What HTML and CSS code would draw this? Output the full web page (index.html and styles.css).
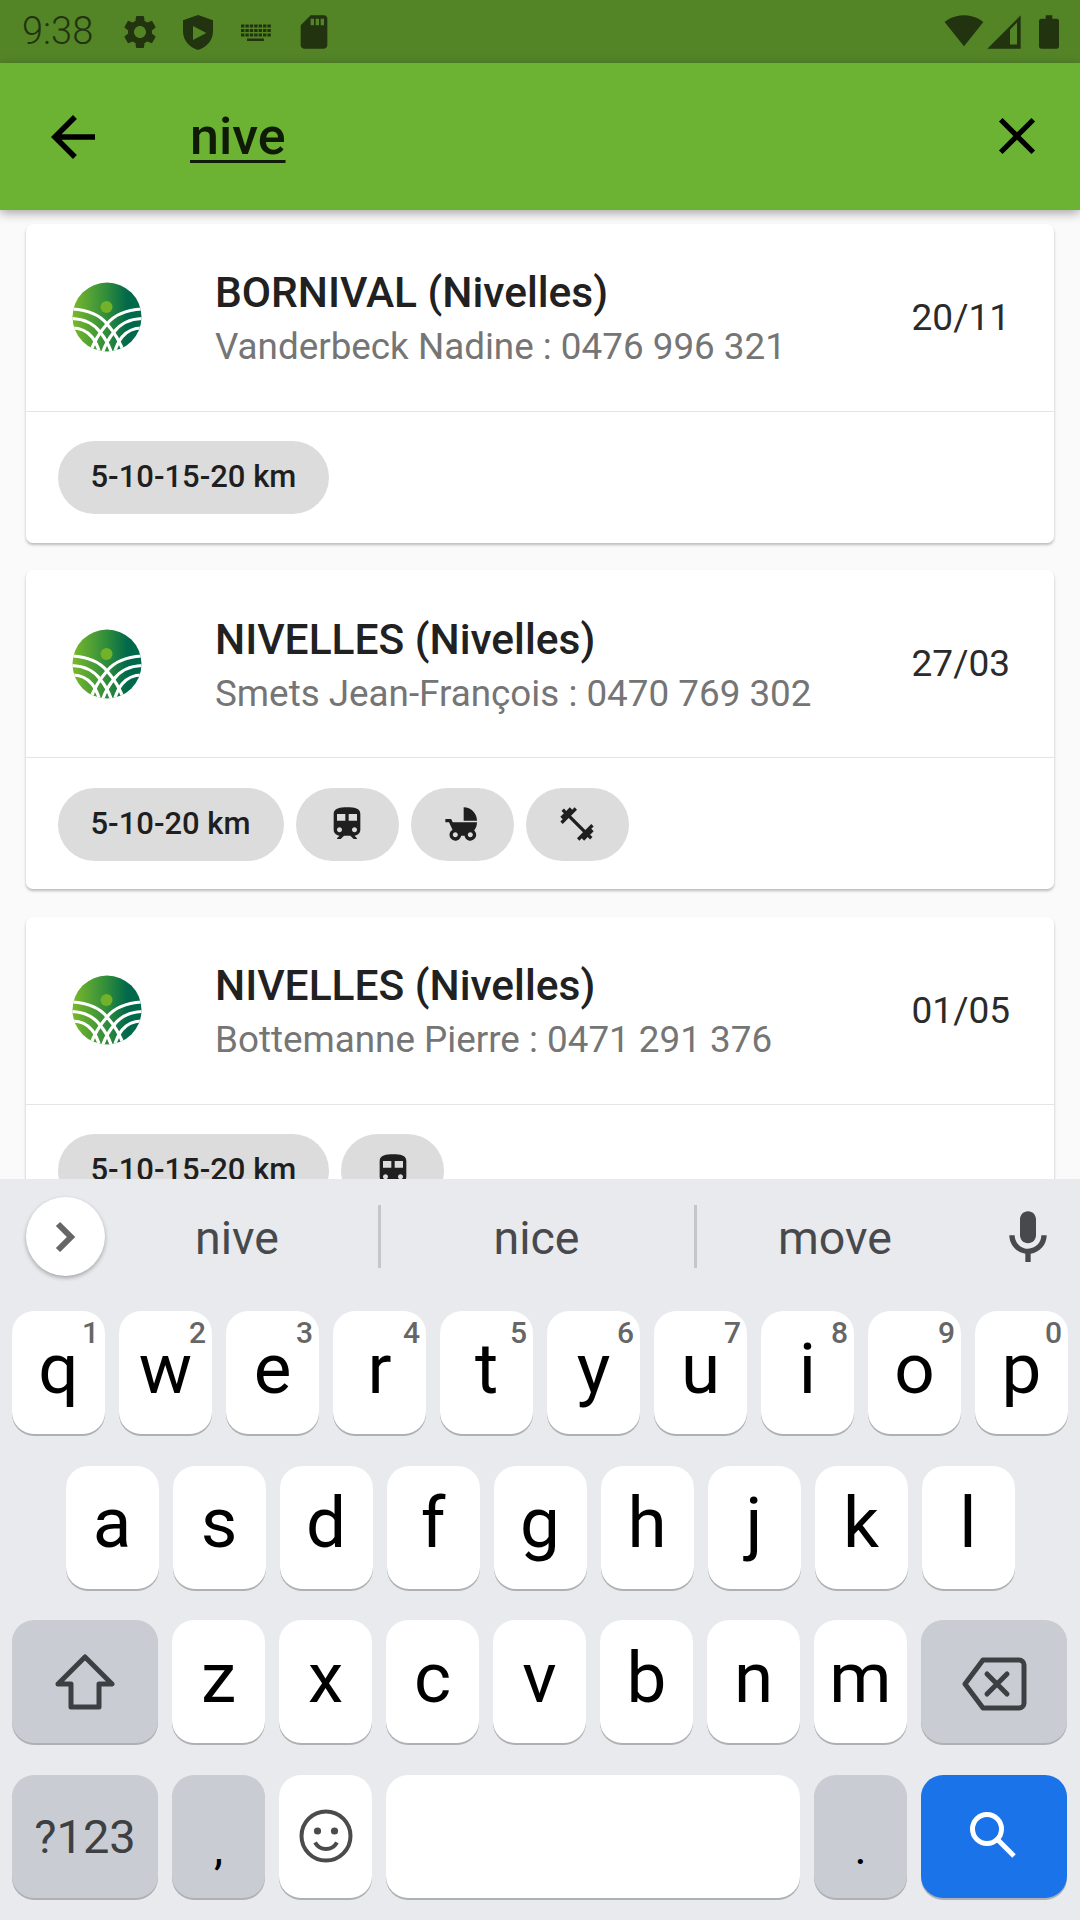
FILE: index.html
```html
<!DOCTYPE html>
<html lang="fr">
<head>
<meta charset="utf-8">
<title>Recherche</title>
<link rel="stylesheet" href="styles.css">
</head>
<body>
<div class="screen">
  <div class="status">
    <span class="time">9:38</span>
    <div class="status-left">
      <svg class="si" viewBox="0 0 24 24"><path d="M19.14,12.94c0.04-0.3,0.06-0.61,0.06-0.94c0-0.32-0.02-0.64-0.07-0.94l2.03-1.58c0.18-0.14,0.23-0.41,0.12-0.61l-1.92-3.32c-0.12-0.22-0.37-0.29-0.59-0.22l-2.39,0.96c-0.5-0.38-1.03-0.7-1.62-0.94L14.4,2.81c-0.04-0.24-0.24-0.41-0.48-0.41h-3.84c-0.24,0-0.43,0.17-0.47,0.41L9.25,5.35C8.66,5.59,8.12,5.92,7.63,6.29L5.24,5.33c-0.22-0.08-0.47,0-0.59,0.22L2.74,8.87C2.62,9.08,2.66,9.34,2.86,9.48l2.03,1.58C4.84,11.36,4.8,11.69,4.8,12s0.02,0.64,0.07,0.94l-2.03,1.58c-0.18,0.14-0.23,0.41-0.12,0.61l1.92,3.32c0.12,0.22,0.37,0.29,0.59,0.22l2.39-0.96c0.5,0.38,1.03,0.7,1.62,0.94l0.36,2.54c0.05,0.24,0.24,0.41,0.48,0.41h3.84c0.24,0,0.44-0.17,0.47-0.41l0.36-2.54c0.59-0.24,1.13-0.56,1.62-0.94l2.39,0.96c0.22,0.08,0.47,0,0.59-0.22l1.92-3.32c0.12-0.22,0.07-0.47-0.12-0.61L19.14,12.94z M12,15.6c-1.98,0-3.6-1.62-3.6-3.6s1.62-3.6,3.6-3.6s3.6,1.62,3.6,3.6S13.98,15.6,12,15.6z"/></svg>
      <svg class="si" viewBox="0 0 24 24"><path fill-rule="evenodd" d="M12 1.8L21 5v6.5c0 5.5-3.8 9.6-9 11.3c-5.2-1.7-9-5.8-9-11.3V5z M9 8.4v8.4l8-4.2z"/></svg>
      <svg class="si kb" viewBox="0 0 40 40"><path class="kb-keys" d="M5 14h30M5 18.5h30M5 23h30"/><path d="M11 26.5h17v2.5H11z"/></svg>
      <svg class="si" viewBox="0 0 24 24"><path d="M18 2h-8L4.02 8 4 20c0 1.1.9 2 2 2h12c1.1 0 2-.9 2-2V4c0-1.1-.9-2-2-2zm-6 6h-2V4h2v4zm3 0h-2V4h2v4zm3 0h-2V4h2v4z"/></svg>
    </div>
    <div class="status-right">
      <svg class="si" viewBox="0 1 24 24"><path d="M12.01 21.49L23.64 7c-.45-.34-4.93-4-11.64-4C5.28 3 .81 6.66.36 7l11.63 14.49.01.01.01-.01z"/></svg>
      <svg class="si" viewBox="0 0 24 24"><path fill-rule="evenodd" d="M2 22h20V2z M15.6 10.6v8.9h4.2V6.3z"/></svg>
      <svg class="si batt" viewBox="0 0 24 24"><path d="M16.67 4H14V2h-4v2H7.33C6.6 4 6 4.6 6 5.33v15.33C6 21.4 6.6 22 7.33 22h9.33c.74 0 1.34-.6 1.34-1.33V5.33C18 4.6 17.4 4 16.67 4z"/></svg>
    </div>
  </div>

  <header class="appbar">
    <svg class="ab-icon" viewBox="0 0 24 24"><path d="M20 11H7.83l5.59-5.59L12 4l-8 8 8 8 1.41-1.41L7.83 13H20v-2z"/></svg>
    <span class="query">nive</span>
    <svg class="ab-icon ab-close" viewBox="0 0 24 24"><path d="M19 6.41L17.59 5 12 10.59 6.41 5 5 6.41 10.59 12 5 17.59 6.41 19 12 13.41 17.59 19 19 17.59 13.41 12z"/></svg>
  </header>

  <main class="list">
    <svg class="defs" width="0" height="0" aria-hidden="true">
      <defs>
        <linearGradient id="lg" x1="0" x2="1" y1="0" y2="0"><stop offset="0" stop-color="#79b82b"/><stop offset="0.5" stop-color="#2f8c3c"/><stop offset="0.8" stop-color="#00684b"/></linearGradient>
        <clipPath id="lc"><circle cx="35" cy="35" r="34.5"/></clipPath>
        <g id="arcs" class="logo-arcs">
          <path d="M0 27C15 28 28 33 35 42C42 50 48 58 52 72"/>
          <path d="M0 36.500C12 37 22 42 28 50C33 56 37 63 40 72"/>
          <path d="M0 46C8 46 15 49 20 55C24 60 26 65 28 72"/>
        </g>
        <symbol id="logo" viewBox="0 0 70 70">
          <circle cx="35" cy="35" r="34.5" fill="url(#lg)"/>
          <circle cx="34.5" cy="25" r="6" fill="#72b12a"/>
          <g clip-path="url(#lc)">
            <use href="#arcs"/>
            <use href="#arcs" transform="translate(70 0) scale(-1 1)"/>
          </g>
        </symbol>
      </defs>
    </svg>

    <article class="card">
      <div class="card-head">
        <svg class="logo"><use href="#logo"/></svg>
        <div class="info">
          <div class="title">BORNIVAL (Nivelles)</div>
          <div class="sub">Vanderbeck Nadine : 0476 996 321</div>
        </div>
        <div class="date">20/11</div>
      </div>
      <div class="chips">
        <span class="chip">5-10-15-20 km</span>
      </div>
    </article>

    <article class="card">
      <div class="card-head">
        <svg class="logo"><use href="#logo"/></svg>
        <div class="info">
          <div class="title">NIVELLES (Nivelles)</div>
          <div class="sub">Smets Jean-François : 0470 769 302</div>
        </div>
        <div class="date">27/03</div>
      </div>
      <div class="chips">
        <span class="chip">5-10-20 km</span>
        <span class="chip chip-icon"><svg viewBox="0 0 24 24"><path d="M12 2c-4 0-8 .5-8 4v9.5C4 17.43 5.57 19 7.5 19L6 20.5v.5h2.23l2-2H14l2 2h2v-.5L16.5 19c1.93 0 3.5-1.57 3.5-3.5V6c0-3.5-3.58-4-8-4zM7.5 17c-.83 0-1.5-.67-1.5-1.5S6.67 14 7.5 14s1.5.67 1.5 1.5S8.33 17 7.5 17zm3.5-7H6V6h5v4zm2 0V6h5v4h-5zm3.5 7c-.83 0-1.5-.67-1.5-1.5s.67-1.5 1.5-1.5 1.5.67 1.5 1.5-.67 1.5-1.5 1.5z"/></svg></span>
        <span class="chip chip-icon"><svg viewBox="0 0 24 24"><path d="M13 2v8h8c0-4.42-3.58-8-8-8zm6.32 13.89C20.37 14.54 21 12.84 21 11H6.44l-.95-2H2v2h2.22s1.89 4.07 2.12 4.42c-1.1.59-1.84 1.75-1.84 3.08C4.5 20.43 6.07 22 8 22c1.76 0 3.22-1.3 3.46-3h2.08c.24 1.7 1.7 3 3.46 3 1.93 0 3.5-1.57 3.5-3.5 0-1.04-.46-1.97-1.18-2.61zM8 20c-.83 0-1.5-.67-1.5-1.5S7.17 17 8 17s1.5.67 1.5 1.5S8.83 20 8 20zm9 0c-.83 0-1.5-.67-1.5-1.5S16.17 17 17 17s1.5.67 1.5 1.5S17.83 20 17 20z"/></svg></span>
        <span class="chip chip-icon"><svg viewBox="0 0 24 24"><path d="M20.57 14.86L22 13.43 20.57 12 17 15.57 8.43 7 12 3.43 10.57 2 9.14 3.43 7.71 2 5.57 4.14 4.14 2.71 2.71 4.14l1.43 1.43L2 7.71l1.43 1.43L2 10.57 3.43 12 7 8.43 15.57 17 12 20.57 13.43 22l1.43-1.43L16.29 22l2.14-2.14 1.43 1.43 1.43-1.43-1.43-1.43L22 16.29z"/></svg></span>
      </div>
    </article>

    <article class="card">
      <div class="card-head">
        <svg class="logo"><use href="#logo"/></svg>
        <div class="info">
          <div class="title">NIVELLES (Nivelles)</div>
          <div class="sub">Bottemanne Pierre : 0471 291 376</div>
        </div>
        <div class="date">01/05</div>
      </div>
      <div class="chips">
        <span class="chip">5-10-15-20 km</span>
        <span class="chip chip-icon"><svg viewBox="0 0 24 24"><path d="M12 2c-4 0-8 .5-8 4v9.5C4 17.43 5.57 19 7.5 19L6 20.5v.5h2.23l2-2H14l2 2h2v-.5L16.5 19c1.93 0 3.5-1.57 3.5-3.5V6c0-3.5-3.58-4-8-4zM7.5 17c-.83 0-1.5-.67-1.5-1.5S6.67 14 7.5 14s1.5.67 1.5 1.5S8.33 17 7.5 17zm3.5-7H6V6h5v4zm2 0V6h5v4h-5zm3.5 7c-.83 0-1.5-.67-1.5-1.5s.67-1.5 1.5-1.5 1.5.67 1.5 1.5-.67 1.5-1.5 1.5z"/></svg></span>
      </div>
    </article>
  </main>

  <section class="keyboard">
    <div class="strip">
      <span class="more"><svg viewBox="0 0 40 40"><path d="M14 7L27 20L14 33"/></svg></span>
      <span class="sug sug-1">nive</span>
      <i class="sep"></i>
      <span class="sug sug-2">nice</span>
      <i class="sep"></i>
      <span class="sug sug-3">move</span>
      <svg class="mic" viewBox="0 0 24 24"><path d="M12 14c1.66 0 3-1.34 3-3V5c0-1.66-1.34-3-3-3S9 3.34 9 5v6c0 1.66 1.34 3 3 3z M17 11c0 2.76-2.24 5-5 5s-5-2.24-5-5H5c0 3.53 2.61 6.43 6 6.92V21h2v-3.08c3.39-.49 6-3.39 6-6.92h-2z"/></svg>
    </div>
    <div class="rows">
      <div class="row">
        <span class="key">q<sup class="num">1</sup></span>
        <span class="key">w<sup class="num">2</sup></span>
        <span class="key">e<sup class="num">3</sup></span>
        <span class="key">r<sup class="num">4</sup></span>
        <span class="key">t<sup class="num">5</sup></span>
        <span class="key">y<sup class="num">6</sup></span>
        <span class="key">u<sup class="num">7</sup></span>
        <span class="key">i<sup class="num">8</sup></span>
        <span class="key">o<sup class="num">9</sup></span>
        <span class="key">p<sup class="num">0</sup></span>
      </div>
      <div class="row row-2">
        <span class="key">a</span><span class="key">s</span><span class="key">d</span><span class="key">f</span><span class="key">g</span><span class="key">h</span><span class="key">j</span><span class="key">k</span><span class="key">l</span>
      </div>
      <div class="row">
        <span class="key wide fn"><svg class="shift" viewBox="0 0 60 56"><path d="M30 3L57 30H44V53H16V30H3Z"/></svg></span>
        <span class="key">z</span><span class="key">x</span><span class="key">c</span><span class="key">v</span><span class="key">b</span><span class="key">n</span><span class="key">m</span>
        <span class="key wide fn"><svg class="bksp" viewBox="0 0 66 54"><path d="M22 3H58a5 5 0 0 1 5 5V46a5 5 0 0 1-5 5H22L4 27Z"/><path d="M26 17L46 37M46 17L26 37"/></svg></span>
      </div>
      <div class="row">
        <span class="key wide fn sym">?123</span>
        <span class="key fn punct">,</span>
        <span class="key icon-key"><svg class="emoji" viewBox="0 0 54 54"><circle class="face" cx="27" cy="27" r="24.5"/><circle class="eye" cx="18.5" cy="22" r="3.6"/><circle class="eye" cx="35.5" cy="22" r="3.6"/><path class="face" d="M16 33.5c3 5 7 6.5 11 6.5s8-1.500 11-6.500"/></svg></span>
        <span class="key space"></span>
        <span class="key fn punct">.</span>
        <span class="key wide go icon-key"><svg class="search" viewBox="0 0 50 50"><circle cx="18" cy="18" r="14.500"/><path d="M28.500 28.500L45 45"/></svg></span>
      </div>
    </div>
  </section>
</div>
</body>
</html>
```
FILE: styles.css
```css
* { box-sizing: border-box; }
html, body { margin: 0; padding: 0; }
body { width: 1080px; height: 1920px; overflow: hidden; font-family: Roboto, "Liberation Sans", sans-serif; background: #fafafa; }
.screen { width: 1080px; height: 1920px; display: flex; flex-direction: column; }

/* status bar */
.status { height: 63px; flex: none; background: #538527; display: flex; align-items: center; padding: 0 11px 0 22px; color: #22330f; }
.time { width: 98px; font-size: 38px; font-weight: 300; line-height: 63px; }
.status-left { display: flex; gap: 18px; flex: 1; }
.status-right { display: flex; }
.si { width: 40px; height: 40px; fill: #22330f; display: block; }
.batt { margin-left: 5px; }
.kb-keys { fill: none; stroke: #22330f; stroke-width: 3; stroke-dasharray: 3.4 1; }

/* app bar */
.appbar { height: 147px; flex: none; background: #6cb233; display: flex; align-items: center; padding: 0 30px 0 40px; box-shadow: 0 3px 10px rgba(0,0,0,.35); position: relative; z-index: 2; }
.ab-icon { width: 66px; height: 66px; fill: #000; flex: none; }
.ab-close { width: 62px; height: 62px; margin: 0 2px 2px 0; }
.query { flex: 1; margin-left: 84px; font-size: 52px; font-weight: 500; color: #0f1a07; text-decoration: underline; text-decoration-thickness: 3px; text-underline-offset: 6px; line-height: 66px; }

/* list */
.list { flex: 1; min-height: 0; overflow: hidden; padding: 13.5px 26px 0; display: flex; flex-direction: column; gap: 27.5px; background: #fafafa; }
.defs { position: absolute; }
.card { flex: none; height: 319px; background: #fff; border-radius: 7px; box-shadow: 0 2px 3px rgba(0,0,0,.25); display: flex; flex-direction: column; }
.card-head { height: 188px; flex: none; display: flex; align-items: center; padding: 0 44px 0 46px; border-bottom: 1px solid #e4e4e4; }
.logo { width: 70px; height: 70px; flex: none; }
.logo-arcs path { fill: none; stroke: #fff; stroke-width: 3.2; }
.info { flex: 1; margin-left: 73px; padding-top: 6px; }
.title { font-size: 42.5px; font-weight: 500; line-height: 54px; color: #212121; }
.sub { font-size: 36.8px; line-height: 54px; color: #757575; }
.date { font-size: 37px; color: #2b2b2b; }
.chips { display: flex; gap: 12px; padding: 29.5px 0 0 31.5px; }
.chip { height: 73px; border-radius: 37px; background: #dcdcdc; padding: 0 33px 2px; display: flex; align-items: center; font-size: 31px; font-weight: 500; color: #1f1f1f; flex: none; }
.chip-icon { width: 103px; padding: 0; justify-content: center; }
.chip-icon svg { width: 40px; height: 40px; fill: #1f1f1f; display: block; }

/* keyboard */
.keyboard { height: 741px; flex: none; background: #e8eaed; position: relative; z-index: 3; }
.strip { height: 132px; display: flex; align-items: flex-start; padding-left: 26px; position: relative; }
.more { width: 79px; height: 79px; margin-top: 18px; border-radius: 50%; background: #fff; box-shadow: 0 2px 4px rgba(0,0,0,.3); flex: none; display: flex; align-items: center; justify-content: center; padding-right: 4px; }
.more svg { width: 40px; height: 40px; fill: none; stroke: #666; stroke-width: 6; }
.sug { font-size: 46.5px; color: #47494c; text-align: center; line-height: 118px; flex: none; }
.sug-1 { width: 273px; padding-right: 9px; }
.sug-2 { width: 313px; padding-right: 2px; }
.sug-3 { width: 278px; padding-right: 2px; }
.sep { width: 3px; height: 63px; margin-top: 26px; background: #c4c6cb; flex: none; }
.mic { width: 64px; height: 64px; margin: 27px 0 0 21px; fill: #47494c; flex: none; }
.rows { display: flex; flex-direction: column; gap: 31.5px; padding: 0 12px; }
.row { height: 123px; display: flex; gap: 14px; }
.row-2 { padding-left: 53.5px; }
.key { width: 93px; height: 100%; background: #fff; border-radius: 22px; box-shadow: 0 2px 0 #aeb0b3; display: flex; align-items: center; justify-content: center; font-size: 71px; color: #000; position: relative; padding-bottom: 9px; flex: none; }
.num { position: absolute; top: 7px; right: 6px; font-size: 30px; font-weight: 500; line-height: 30px; color: #666; vertical-align: baseline; }
.wide { width: 146px; }
.fn { background: #caccd3; padding-bottom: 0; }
.icon-key { padding-bottom: 0; }
.space { width: 414px; }
.go { background: #1a73e8; }
.sym { font-size: 47px; color: #3c4043; }
.punct { font-size: 46px; align-items: flex-end; padding-bottom: 27px; line-height: 46px; }
.shift { width: 60px; height: 56px; fill: none; stroke: #3c4043; stroke-width: 5; stroke-linejoin: round; }
.bksp { width: 66px; height: 54px; margin-top: 5px; fill: none; stroke: #3c4043; stroke-width: 5; stroke-linejoin: round; stroke-linecap: round; }
.emoji { width: 54px; height: 54px; }
.face { fill: none; stroke: #4a4b4d; stroke-width: 4; }
.eye { fill: #4a4b4d; }
.search { width: 50px; height: 50px; fill: none; stroke: #fff; stroke-width: 5; }
```
